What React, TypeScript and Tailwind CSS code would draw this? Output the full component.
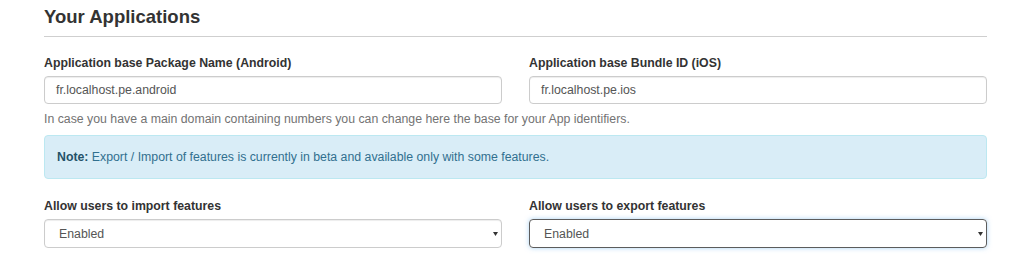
export default function App() {
  const font = { fontFamily: '"Liberation Sans", Arial, sans-serif' };

  return (
    <div className="w-[1024px] h-[264px] bg-white overflow-hidden" style={font}>
      <div className="ml-[44px] w-[943px] pt-[6px]">
        <h3 className="text-[18.5px] leading-[22px] font-bold text-[#333]">Your Applications</h3>
        <div className="mt-[8px] h-px bg-[#cfcfcf]" />

        {/* Identifiers */}
        <div className="grid grid-cols-2 gap-[27px] mt-[18px]">
          <div>
            <label className="block text-[12.3px] leading-[17px] font-bold text-[#333] mb-[4px]">
              Application base Package Name (Android)
            </label>
            <div className="h-[28px] border border-[#ccc] rounded-[4px] px-[11px] flex items-center text-[12.3px] text-[#555] shadow-[inset_0_1px_1px_rgba(0,0,0,0.075)]">
              fr.localhost.pe.android
            </div>
          </div>
          <div>
            <label className="block text-[12.3px] leading-[17px] font-bold text-[#333] mb-[4px]">
              Application base Bundle ID (iOS)
            </label>
            <div className="h-[28px] border border-[#ccc] rounded-[4px] px-[11px] flex items-center text-[12.3px] text-[#555] shadow-[inset_0_1px_1px_rgba(0,0,0,0.075)]">
              fr.localhost.pe.ios
            </div>
          </div>
        </div>
        <p className="mt-[7px] text-[12.3px] leading-[17px] text-[#737373]">
          In case you have a main domain containing numbers you can change here the base for your App identifiers.
        </p>

        {/* Note */}
        <div className="mt-[7px] border border-[#bce8f1] bg-[#d9edf7] rounded-[4px] px-[12px] py-[13px] text-[12.3px] leading-[16px] text-[#31708f]">
          <b className="text-[#245269]">Note:</b> Export / Import of features is currently in beta and available only with some features.
        </div>

        {/* Import / export */}
        <div className="grid grid-cols-2 gap-[27px] mt-[19px]">
          {[
            { label: "Allow users to import features", focus: false },
            { label: "Allow users to export features", focus: true },
          ].map((f) => (
            <div key={f.label}>
              <label className="block text-[12.3px] leading-[17px] font-bold text-[#333] mb-[4px]">{f.label}</label>
              <div
                className={`h-[29px] border rounded-[4px] pl-[14px] pr-[3px] flex items-center justify-between text-[12.3px] text-[#555] ${
                  f.focus
                    ? "border-[#5c5c5c] shadow-[0_0_5px_rgba(102,175,233,0.55)]"
                    : "border-[#ccc] shadow-[inset_0_1px_1px_rgba(0,0,0,0.075)]"
                }`}
              >
                <span className="pt-px">Enabled</span>
                <svg width="5" height="4" viewBox="0 0 5 4" className="mt-px">
                  <path d="M0 0h5L2.5 4z" fill="#333" />
                </svg>
              </div>
            </div>
          ))}
        </div>
      </div>
    </div>
  );
}
